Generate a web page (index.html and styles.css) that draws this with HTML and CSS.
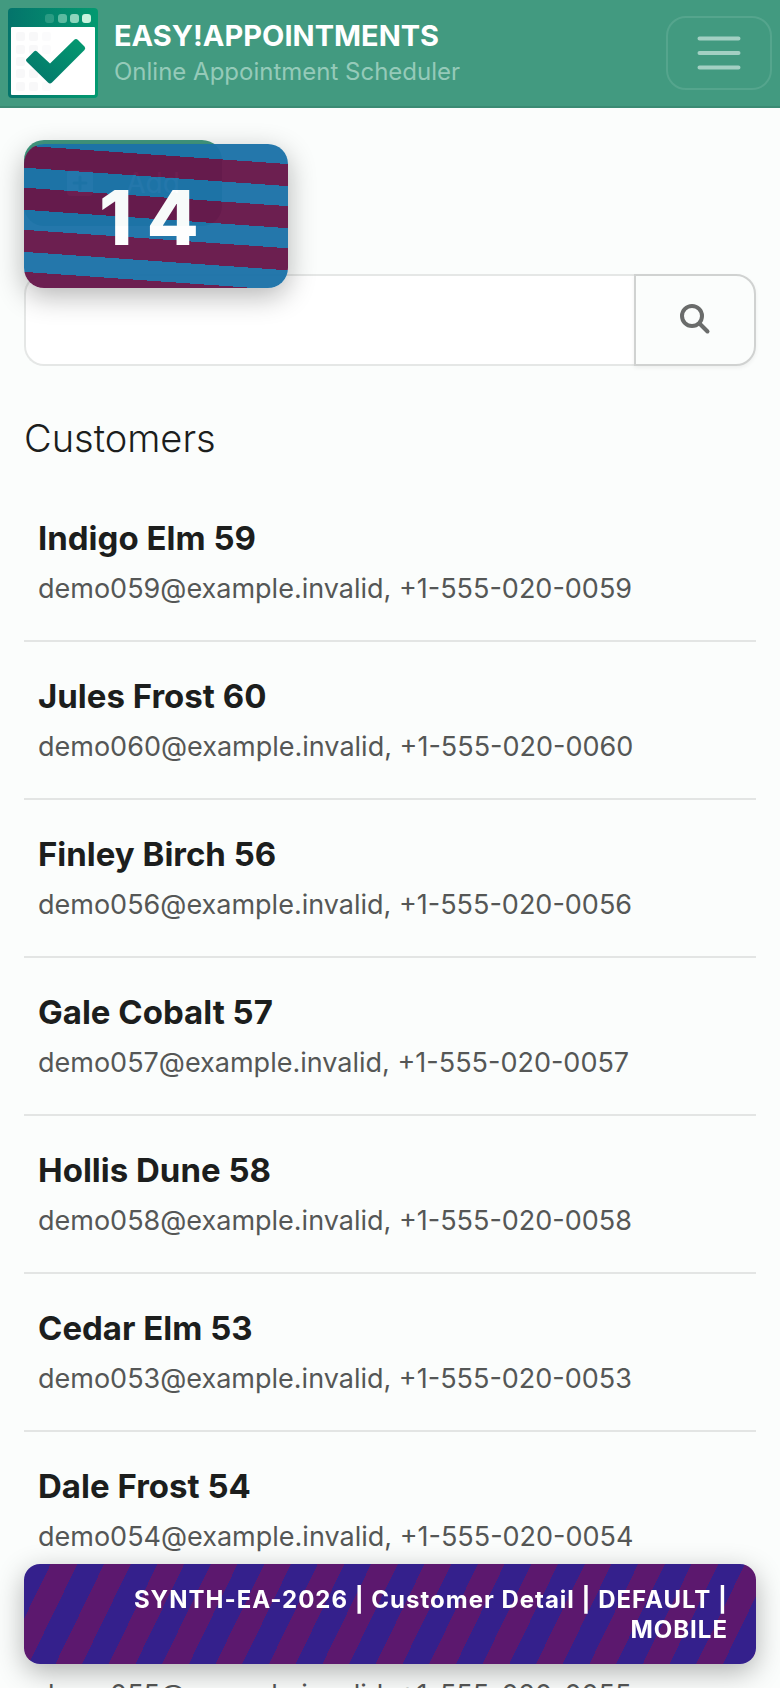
FILE: index.html
```html
<!DOCTYPE html>
<html lang="en">
<head>
    <meta charset="UTF-8">
    <meta name="viewport" content="width=device-width, initial-scale=1.0">
    <title>Customers | Easy!Appointments</title>
    <link rel="stylesheet" href="styles.css">
</head>
<body>
    <header class="header">
        <a class="brand" href="#">
            <svg class="logo" viewBox="0 0 90 90" aria-hidden="true">
                <defs>
                    <linearGradient id="green" x1="0" y1="0" x2="1" y2="0">
                        <stop offset="0" stop-color="#04746b"/>
                        <stop offset="1" stop-color="#039a70"/>
                    </linearGradient>
                    <linearGradient id="check" x1="0" y1="1" x2="1" y2="0">
                        <stop offset="0" stop-color="#04746b"/>
                        <stop offset="1" stop-color="#039a70"/>
                    </linearGradient>
                </defs>
                <rect width="90" height="90" rx="4" fill="url(#green)"/>
                <rect x="3" y="19" width="84" height="68" rx="1" fill="#fff"/>
                <g fill="#c8f3de">
                    <rect x="37" y="6" width="9" height="9" rx="3" opacity=".2"/>
                    <rect x="50" y="6" width="9" height="9" rx="3" opacity=".45"/>
                    <rect x="62" y="6" width="9" height="9" rx="3" opacity=".7"/>
                    <rect x="74" y="6" width="9" height="9" rx="3"/>
                </g>
                <g fill="#f8f8f9">
                    <rect x="8" y="24" width="9" height="9" rx="2"/>
                    <rect x="21" y="24" width="9" height="9" rx="2"/>
                    <rect x="34" y="24" width="9" height="9" rx="2" opacity=".5"/>
                    <rect x="8" y="37" width="9" height="9" rx="2"/>
                    <rect x="21" y="37" width="9" height="9" rx="2"/>
                    <rect x="34" y="37" width="9" height="9" rx="2" opacity=".5"/>
                    <rect x="8" y="49" width="9" height="9" rx="2"/>
                    <rect x="8" y="61" width="9" height="9" rx="2"/>
                    <rect x="21" y="61" width="9" height="9" rx="2"/>
                    <rect x="8" y="74" width="9" height="9" rx="2"/>
                    <rect x="21" y="74" width="9" height="9" rx="2"/>
                    <rect x="34" y="74" width="9" height="9" rx="2" opacity=".5"/>
                </g>
                <path d="M19 50.500 26 43.500Q27.500 42 29 43.500L42 55.500 66 32Q68 30 70 32L76.500 38.500Q78 40 76.500 42L44 74.500Q42 76.500 40 74.500L19 54Q17 52 19 50.500Z" fill="url(#check)"/>
            </svg>
            <span class="brand-text">
                <span class="brand-name">EASY!APPOINTMENTS</span>
                <span class="brand-sub">Online Appointment Scheduler</span>
            </span>
        </a>
        <button class="menu-toggle" type="button" aria-label="Toggle navigation">
            <svg viewBox="0 0 60 60" aria-hidden="true">
                <path d="M10.500 15.500h39M10.500 30h39M10.500 44.500h39" stroke="#a3d0c3" stroke-width="4" stroke-linecap="round"/>
            </svg>
        </button>
    </header>

    <main class="page">
        <div class="toolbar">
            <button class="add-btn" type="button">
                <svg viewBox="0 0 28 28" aria-hidden="true">
                    <rect x="1" y="1" width="26" height="26" rx="4" fill="#fff"/>
                    <path d="M14 8v12M8 14h12" stroke="#429a80" stroke-width="3" stroke-linecap="round"/>
                </svg>
                Add
            </button>
            <div class="stamp">14</div>
        </div>

        <form class="search">
            <input class="search-input" type="text" aria-label="Search customers">
            <button class="search-btn" type="submit" aria-label="Search">
                <svg viewBox="0 0 32 32" aria-hidden="true">
                    <circle cx="13" cy="12" r="10" fill="none" stroke="#6a6c6b" stroke-width="4"/>
                    <path d="M20.500 19.500 28.500 27.500" stroke="#6a6c6b" stroke-width="4" stroke-linecap="round"/>
                </svg>
            </button>
        </form>

        <h1 class="title">Customers</h1>

        <ul class="customers">
            <li class="customer">
                <strong>Indigo Elm 59</strong>
                <span>demo059@example.invalid, +1-555-020-0059</span>
            </li>
            <li class="customer">
                <strong>Jules Frost 60</strong>
                <span>demo060@example.invalid, +1-555-020-0060</span>
            </li>
            <li class="customer">
                <strong>Finley Birch 56</strong>
                <span>demo056@example.invalid, +1-555-020-0056</span>
            </li>
            <li class="customer">
                <strong>Gale Cobalt 57</strong>
                <span>demo057@example.invalid, +1-555-020-0057</span>
            </li>
            <li class="customer">
                <strong>Hollis Dune 58</strong>
                <span>demo058@example.invalid, +1-555-020-0058</span>
            </li>
            <li class="customer">
                <strong>Cedar Elm 53</strong>
                <span>demo053@example.invalid, +1-555-020-0053</span>
            </li>
            <li class="customer">
                <strong>Dale Frost 54</strong>
                <span>demo054@example.invalid, +1-555-020-0054</span>
            </li>
            <li class="customer">
                <strong>Ellis Grove 55</strong>
                <span>demo055@example.invalid, +1-555-020-0055</span>
            </li>
        </ul>
    </main>

    <div class="ribbon">SYNTH-EA-2026 | Customer Detail | DEFAULT | MOBILE</div>
</body>
</html>
```
FILE: styles.css
```css
* {
    box-sizing: border-box;
}
body {
    margin: 0;
    height: 100vh;
    overflow: hidden;
    background: #fbfdfc;
    color: #1c1e1d;
    font-family: Inter, 'Liberation Sans', sans-serif;
    font-size: 28px;
}
button, input {
    font: inherit;
}
.header {
    display: flex;
    justify-content: space-between;
    align-items: center;
    height: 108px;
    padding: 0 8px;
    background: #429a80;
    border-bottom: 2px solid #3b8b74;
}
.brand {
    display: flex;
    align-items: center;
    gap: 16px;
    color: #fff;
    text-decoration: none;
}
.logo {
    width: 90px;
    height: 90px;
}
.brand-text {
    padding-top: 2px;
}
.brand-name, .brand-sub {
    display: block;
    line-height: 36px;
}
.brand-name {
    font-size: 29px;
    font-weight: 700;
}
.brand-sub {
    font-size: 24px;
    color: #95cab9;
}
.menu-toggle {
    display: flex;
    justify-content: center;
    align-items: center;
    width: 106px;
    height: 74px;
    padding: 0;
    background: none;
    border: 2px solid #55a58d;
    border-radius: 20px;
}
.menu-toggle svg {
    width: 60px;
    height: 60px;
}
.page {
    padding: 32px 24px 0;
}
.toolbar {
    position: relative;
    height: 134px;
}
.add-btn {
    display: flex;
    justify-content: center;
    align-items: center;
    gap: 32px;
    width: 198px;
    height: 86px;
    background: #429a80;
    color: #fff;
    border: none;
    border-radius: 20px;
}
.add-btn svg {
    width: 28px;
    height: 28px;
}
/* sits over the add button */
.stamp {
    position: absolute;
    top: 4px;
    left: 0;
    width: 264px;
    height: 144px;
    border-radius: 20px;
    background: repeating-linear-gradient(184deg, #1c72a8 0 20px, #67164a 20px 42px);
    box-shadow: 0 8px 28px rgba(0, 0, 0, 0.3);
    color: #fff;
    font-size: 76px;
    font-weight: 800;
    line-height: 146px;
    letter-spacing: 14px;
    text-align: center;
    opacity: 0.96;
}
.search {
    display: flex;
    height: 92px;
}
.search-input {
    flex: 1;
    min-width: 0;
    padding: 0 24px;
    background: #fff;
    border: 2px solid #e5e7e6;
    border-right: none;
    border-radius: 20px 0 0 20px;
}
.search-btn {
    display: flex;
    justify-content: center;
    align-items: center;
    width: 122px;
    padding: 0;
    background: #fbfdfc;
    border: 2px solid #d0d2d1;
    border-radius: 0 20px 20px 0;
    box-shadow: 0 2px 4px rgba(0, 0, 0, 0.06);
}
.search-btn svg {
    width: 32px;
    height: 32px;
}
.title {
    margin: 48px 0 22px;
    font-size: 38px;
    font-weight: 300;
    line-height: 48px;
}
.customers {
    margin: 0;
    padding: 0;
    list-style: none;
}
.customer {
    display: flex;
    flex-direction: column;
    gap: 6px;
    height: 158px;
    padding: 30px 14px 0;
    border-bottom: 2px solid #e3e5e4;
}
.customer strong {
    font-size: 33px;
    font-weight: 700;
    line-height: 48px;
}
.customer span {
    font-size: 27px;
    line-height: 42px;
    color: #555756;
}
.ribbon {
    position: fixed;
    left: 24px;
    right: 24px;
    bottom: 24px;
    padding: 21px 28px 19px;
    border-radius: 16px;
    background: repeating-linear-gradient(116deg, #34208c 0 24px, #5c186e 24px 48px);
    box-shadow: 0 8px 28px rgba(0, 0, 0, 0.3);
    color: #fff;
    font-size: 24px;
    font-weight: 700;
    line-height: 30px;
    letter-spacing: 1px;
    text-align: right;
}
```
